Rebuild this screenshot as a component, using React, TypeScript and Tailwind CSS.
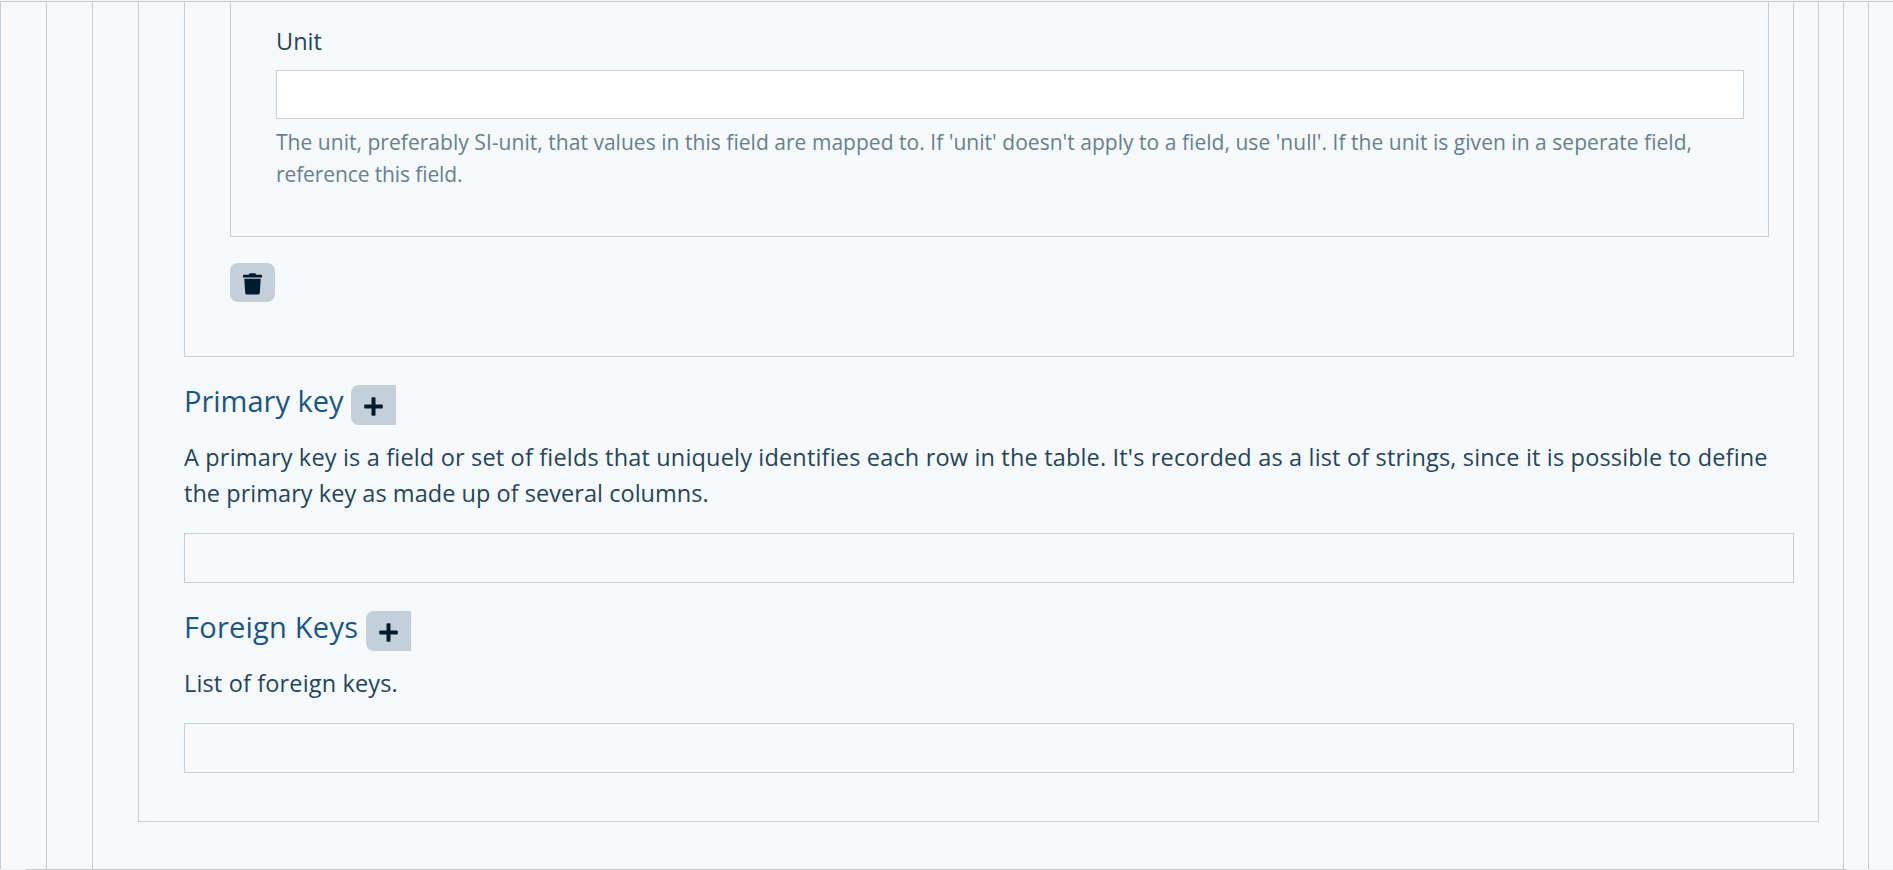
import React from "react";

function TrashIcon() {
  return (
    <svg className="block h-[22px] w-[19px]" viewBox="0 0 19 22" fill="#001b2e">
      <path d="M0.6 1.8H5.6L6.3 0.7Q6.6 0.2 7.2 0.2H11.8Q12.4 0.2 12.7 0.7L13.4 1.8H18.4Q19 1.8 19 2.4V4.4H0V2.4Q0 1.8 0.6 1.8Z" />
      <path d="M1.3 5.7H17.7L16.8 19.9Q16.7 21.6 15 21.6H4Q2.3 21.6 2.2 19.9Z" />
    </svg>
  );
}

function PlusIcon() {
  return (
    <svg className="block h-[19px] w-[19px]" viewBox="0 0 19 19" fill="#001b2e">
      <path d="M8.4 0.3H10.6Q11.5 0.3 11.5 1.2V7.5H17.8Q18.8 7.5 18.8 8.5V10.5Q18.8 11.5 17.8 11.5H11.5V17.8Q11.5 18.7 10.6 18.7H8.4Q7.5 18.7 7.5 17.8V11.5H1.2Q0.2 11.5 0.2 10.5V8.5Q0.2 7.5 1.2 7.5H7.5V1.2Q7.5 0.3 8.4 0.3Z" />
    </svg>
  );
}

function AddButton({ label }: { label: string }) {
  return (
    <button
      aria-label={label}
      className="flex h-10 w-[45px] items-center justify-center rounded-l-lg bg-[#c3d0d9] pt-[2px]"
    >
      <PlusIcon />
    </button>
  );
}

export default function App() {
  return (
    <div className="h-[870px] w-full overflow-hidden bg-[#f5f9fc] font-['Open_Sans','Noto_Sans',sans-serif] whitespace-nowrap text-[#264459]">
      <div className="h-px bg-[#f4f5f5]" />
      <div className="h-px bg-[#c8cbcc]" />
      <div className="h-[867px] w-[1894px] border-x border-[#c1d0da] pr-6 pl-[45px]">
        <div className="h-full border-x border-[#c1d0da] pr-6 pl-[45px]">
          <div className="h-full border-x border-[#c1d0da] pr-6 pl-[45px]">
            <div className="h-[820px] border-x border-b border-[#c1d0da] pr-6 pl-[45px]">
              <section className="h-[355px] border-x border-b border-[#c1d0da] pr-6 pl-[45px]">
                <div className="h-[235px] border-x border-b border-[#c1d0da] pt-[21px] pr-6 pl-[45px]">
                  <label htmlFor="unit" className="block h-9 text-[23.5px] leading-9">
                    Unit
                  </label>
                  <input
                    id="unit"
                    className="mt-[11px] block h-[49px] w-full border border-[#c1d0da] bg-white"
                  />
                  <p className="mt-[7px] text-[21px] leading-8 text-[#677f8f]">
                    <span className="block tracking-[0.036px]">
                      The unit, preferably SI-unit, that values in this field are mapped to. If 'unit' doesn't apply to a field, use 'null'. If the unit is given in a seperate field,
                    </span>
                    <span className="block tracking-[-0.11px]">reference this field.</span>
                  </p>
                </div>
                <button
                  aria-label="Delete"
                  className="mt-[26px] flex h-[39px] w-[45px] items-center justify-center rounded-lg bg-[#c3d0d9] pt-[3px]"
                >
                  <TrashIcon />
                </button>
              </section>

              <section>
                <div className="flex gap-2 pt-7">
                  <h3 className="h-10 w-[159px] text-[29px] leading-8 text-[#1b5583]">Primary key</h3>
                  <AddButton label="Add primary key" />
                </div>
                <p className="mt-[14px] text-[23.5px] leading-9">
                  <span className="block tracking-[0.17px]">
                    A primary key is a field or set of fields that uniquely identifies each row in the table. It's recorded as a list of strings, since it is possible to define
                  </span>
                  <span className="block tracking-[0.04px]">the primary key as made up of several columns.</span>
                </p>
                <div className="mt-[22px] h-[50px] border border-[#c1d0da]" />
              </section>

              <section>
                <div className="flex gap-2 pt-7">
                  <h3 className="h-10 w-[174px] text-[29px] leading-8 tracking-[0.24px] text-[#1b5583]">Foreign Keys</h3>
                  <AddButton label="Add foreign key" />
                </div>
                <p className="mt-[14px] text-[23.5px] leading-9 tracking-[0.15px]">List of foreign keys.</p>
                <div className="mt-[22px] h-[50px] border border-[#c1d0da]" />
              </section>
            </div>
          </div>
        </div>
      </div>
      <div className="h-px bg-[#eeefef] pr-[47px] pl-[26px]">
        <div className="h-px bg-[#c8cbcc]" />
      </div>
    </div>
  );
}
